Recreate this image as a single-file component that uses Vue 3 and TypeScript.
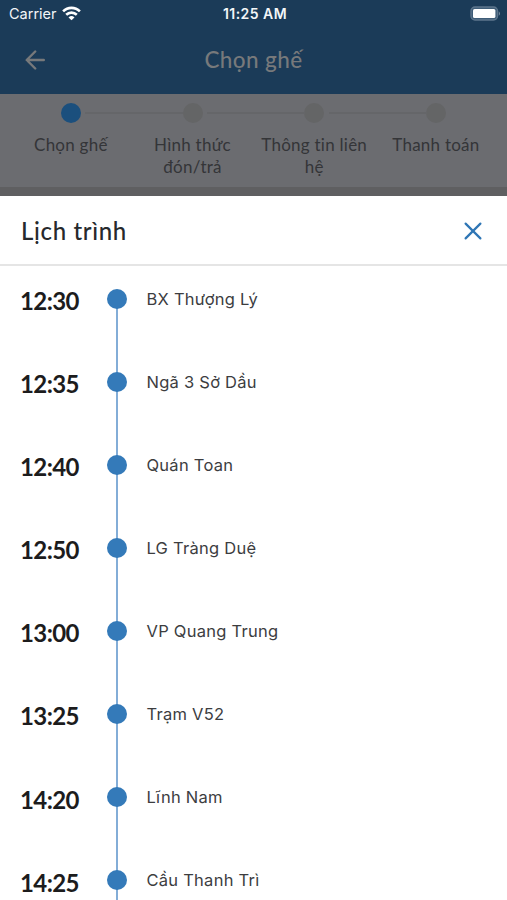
<script setup lang="ts">
interface Step {
  lines: string[]
  active?: boolean
}

interface Stop {
  time: string
  name: string
}

const steps: Step[] = [
  { lines: ['Chọn ghế'], active: true },
  { lines: ['Hình thức', 'đón/trả'] },
  { lines: ['Thông tin liên', 'hệ'] },
  { lines: ['Thanh toán'] },
]

const stops: Stop[] = [
  { time: '12:30', name: 'BX Thượng Lý' },
  { time: '12:35', name: 'Ngã 3 Sở Dầu' },
  { time: '12:40', name: 'Quán Toan' },
  { time: '12:50', name: 'LG Tràng Duệ' },
  { time: '13:00', name: 'VP Quang Trung' },
  { time: '13:25', name: 'Trạm V52' },
  { time: '14:20', name: 'Lĩnh Nam' },
  { time: '14:25', name: 'Cầu Thanh Trì' },
]
</script>

<template>
  <main class="screen">
    <header class="top">
      <div class="status">
        <div class="carrier">
          <span>Carrier</span>
          <svg width="19" height="15" viewBox="0 0 19 15" fill="none" stroke="#fff" stroke-width="2.6">
            <path d="M1.1 5.4C5.8.7 13.2.7 17.9 5.4" />
            <path d="M4.2 8.8C7.2 5.9 11.8 5.9 14.8 8.8" />
            <path d="M6.5 11.4Q9.5 8.8 12.5 11.4L9.5 14.2Z" fill="#fff" stroke="none" />
          </svg>
        </div>
        <span class="clock">11:25 AM</span>
        <svg class="battery" width="31" height="15" viewBox="0 0 31 15">
          <rect x="1" y="1" width="26.5" height="13" rx="4" fill="#3f5d78" stroke="#5d758c" stroke-width="1.4" />
          <rect x="3" y="3" width="22.4" height="9" rx="1.6" fill="#fff" />
          <path d="M28.8 5.2Q31 7.5 28.8 9.8Z" fill="#8395a6" />
        </svg>
      </div>
      <div class="nav">
        <svg class="back" width="20" height="20" viewBox="0 0 20 20" fill="none" stroke="#77797b" stroke-width="2.4" stroke-linecap="round" stroke-linejoin="round">
          <path d="M18.8 10H2M10.2 1.5L1.7 10L10.2 18.5" />
        </svg>
        <h1>Chọn ghế</h1>
      </div>
    </header>

    <ol class="steps">
      <li v-for="step in steps" :key="step.lines[0]" :class="{ active: step.active }">
        <i class="step-dot"></i>
        <span v-for="line in step.lines" :key="line" class="step-line">{{ line }}</span>
      </li>
    </ol>

    <section class="sheet">
      <div class="sheet-head">
        <h2>Lịch trình</h2>
        <svg width="18" height="18" viewBox="0 0 18 18" fill="none" stroke="#2f76b5" stroke-width="2.2" stroke-linecap="round">
          <path d="M1.6 1.6L16.4 16.4M16.4 1.6L1.6 16.4" />
        </svg>
      </div>
      <ul class="stops">
        <li v-for="stop in stops" :key="stop.time">
          <time>{{ stop.time }}</time>
          <div class="rail"><i></i></div>
          <span class="name">{{ stop.name }}</span>
        </li>
      </ul>
    </section>
  </main>
</template>

<style>
body {
  margin: 0;
  overflow: hidden;
}
</style>

<style scoped>
.screen {
  display: flex;
  flex-direction: column;
  width: 507px;
  height: 900px;
  overflow: hidden;
  background: #5f5f61;
  font-family: Lato, 'Noto Sans', sans-serif;
  font-variant-ligatures: none;
}

h1,
h2,
ol,
ul {
  margin: 0;
  padding: 0;
  list-style: none;
}

svg {
  display: block;
}

.top {
  flex: none;
  height: 94px;
  background: #1b3b58;
}

.status {
  display: grid;
  grid-template-columns: 1fr auto 1fr;
  align-items: center;
  height: 27px;
  padding: 0 6px 0 9px;
  color: #f3f6f8;
  font: 14.5px/27px Inter, sans-serif;
}

.carrier {
  display: flex;
  align-items: center;
  gap: 5px;
}

.clock {
  font-size: 14px;
  font-weight: 600;
  letter-spacing: 0.45px;
}

.battery {
  justify-self: end;
}

.nav {
  display: grid;
  grid-template-columns: 1fr auto 1fr;
  align-items: center;
  height: 66px;
  padding: 0 25px;
}

h1 {
  color: #77797b;
  font-size: 22.5px;
  font-weight: 500;
  line-height: 30px;
  letter-spacing: 0.4px;
}

.steps {
  display: grid;
  flex: none;
  grid-template-columns: repeat(4, 121.7px);
  box-sizing: border-box;
  height: 93px;
  padding: 9px 10px 0;
  background: #6b6c70;
}

.steps li {
  position: relative;
  display: flex;
  flex-direction: column;
  align-items: center;
  color: #343538;
  font-size: 17px;
  line-height: 22px;
  letter-spacing: 0.25px;
}

.steps li + li::before {
  position: absolute;
  top: 9px;
  right: 70px;
  width: 98px;
  height: 2px;
  background: #656669;
  content: '';
}

.step-dot {
  width: 20px;
  height: 20px;
  margin-bottom: 10.5px;
  border-radius: 50%;
  background: #646566;
}

.active .step-dot {
  background: #1b4f7d;
}

.step-line {
  white-space: nowrap;
}

.sheet {
  flex: 1;
  min-height: 0;
  margin-top: 9px;
  overflow: hidden;
  background: #fff;
}

.sheet-head {
  display: flex;
  align-items: center;
  justify-content: space-between;
  box-sizing: border-box;
  height: 70px;
  padding: 1px 25px 0 21px;
  border-bottom: 2px solid #e5e5e5;
}

h2 {
  color: #27292c;
  font-size: 24px;
  font-weight: 500;
  line-height: 32px;
  letter-spacing: 0.65px;
}

.stops {
  padding-top: 22.5px;
}

.stops li {
  display: grid;
  grid-template-columns: 87px 20px 1fr;
  height: 83.1px;
  padding-left: 20px;
}

time {
  padding-top: 0.5px;
  color: #1c1c1d;
  font-size: 24px;
  font-weight: 700;
  line-height: 24px;
  letter-spacing: -0.6px;
}

.rail {
  background: linear-gradient(#83add7, #83add7) center / 2px 100% no-repeat;
}

.rail i {
  display: block;
  width: 20px;
  height: 20px;
  border-radius: 50%;
  background: #347ab9;
}

.stops li:first-child .rail {
  background-position: center 10px;
}

.name {
  padding-left: 19.5px;
  color: #3c3d3f;
  font: 16.5px/21px Inter, sans-serif;
  letter-spacing: 0.25px;
}
</style>
